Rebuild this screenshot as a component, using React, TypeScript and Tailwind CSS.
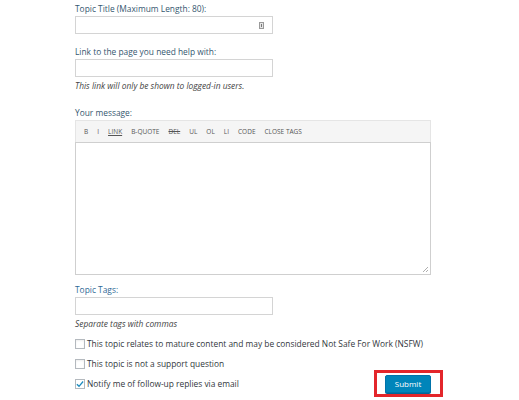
export default function App() {
  const tools = [
    { label: 'B', cls: '' },
    { label: 'I', cls: '' },
    { label: 'LINK', cls: 'underline' },
    { label: 'B-QUOTE', cls: '' },
    { label: 'DEL', cls: 'line-through' },
    { label: 'UL', cls: '' },
    { label: 'OL', cls: '' },
    { label: 'LI', cls: '' },
    { label: 'CODE', cls: '' },
    { label: 'CLOSE TAGS', cls: '' },
  ];

  const checks = [
    { text: 'This topic relates to mature content and may be considered Not Safe For Work (NSFW)', checked: false },
    { text: 'This topic is not a support question', checked: false },
  ];

  return (
    <div
      className="w-[519px] h-[400px] bg-white pl-[75px] pt-[3px] text-[8.4px] text-[#32373c]"
      style={{ fontFamily: '"Open Sans", "Liberation Sans", sans-serif' }}
    >
      <div className="w-[356px]">
        {/* Topic title */}
        <div className="h-[11px] leading-[11px] text-[#35576f]">Topic Title (Maximum Length: 80):</div>
        <div className="mt-[2px] w-[198px] h-[18px] border border-[#d4d4d4] bg-white flex items-center justify-end pr-[8px]">
          <div className="w-[5px] h-[7px] border border-[#9a9a9a] bg-[#e6e6e6] flex items-center justify-center">
            <div className="w-[1px] h-[3px] bg-[#777]" />
          </div>
        </div>

        {/* Link */}
        <div className="mt-[12px] h-[11px] leading-[11px] text-[#35576f]">Link to the page you need help with:</div>
        <div className="mt-[2px] w-[198px] h-[18px] border border-[#d4d4d4] bg-white" />
        <div className="mt-[3px] h-[11px] leading-[11px] italic text-[#444]">This link will only be shown to logged-in users.</div>

        {/* Message */}
        <div className="mt-[16px] h-[11px] leading-[11px] text-[#35576f]">Your message:</div>
        <div className="mt-[2px] h-[22px] border border-[#e5e5e5] border-b-0 bg-[#f5f5f5] flex items-center pl-[8px] gap-[9px] text-[6.5px] text-[#555]">
          {tools.map((t) => (
            <span key={t.label} className={t.cls}>
              {t.label}
            </span>
          ))}
        </div>
        <div className="relative h-[133px] border border-[#cfcfcf] bg-white">
          <svg className="absolute right-[1px] bottom-[1px]" width="7" height="7" viewBox="0 0 7 7">
            <path d="M6 1 L1 6 M6 4 L4 6" stroke="#999" strokeWidth="0.8" />
          </svg>
        </div>

        {/* Tags */}
        <div className="mt-[9px] h-[11px] leading-[11px] text-[#2f6a96]">Topic Tags:</div>
        <div className="mt-[2px] w-[198px] h-[18px] border border-[#d4d4d4] bg-white" />
        <div className="mt-[3px] h-[11px] leading-[11px] italic text-[#444]">Separate tags with commas</div>

        {/* Options */}
        <div className="mt-[9px] flex flex-col gap-[9px]">
          {checks.map((c) => (
            <div key={c.text} className="flex items-center h-[11px] gap-[2px]">
              <div className="w-[10px] h-[10px] border border-[#b4b9be] bg-white shadow-[inset_0_1px_2px_rgba(0,0,0,0.07)]" />
              <span className="leading-[11px] whitespace-nowrap">{c.text}</span>
            </div>
          ))}
          <div className="flex items-center justify-between h-[11px]">
            <div className="flex items-center gap-[2px]">
              <div className="w-[10px] h-[10px] border border-[#b4b9be] bg-white flex items-center justify-center">
                <svg width="9" height="8" viewBox="0 0 9 8">
                  <path d="M1 4.2 L3.4 6.6 L8 1.2" stroke="#1e8cbe" strokeWidth="1.5" fill="none" />
                </svg>
              </div>
              <span className="leading-[11px]">Notify me of follow-up replies via email</span>
            </div>
            <div className="relative">
              <button className="w-[46px] h-[18px] rounded-[2px] bg-[#0085ba] border border-[#0073aa] shadow-[0_1px_0_#006799] text-white text-[8px] leading-none">
                Submit
              </button>
              <div className="absolute left-[-11px] top-[-5px] w-[69px] h-[27px] border-[3px] border-[#e3262b]" />
            </div>
          </div>
        </div>
      </div>
    </div>
  );
}
